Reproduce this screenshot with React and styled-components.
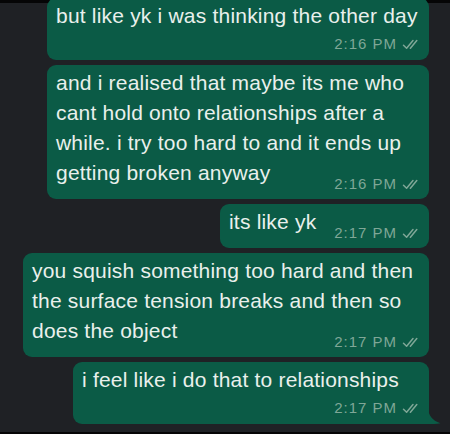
import React from "react";
import styled, { createGlobalStyle } from "styled-components";

const GlobalStyle = createGlobalStyle`
  * { box-sizing: border-box; }
  body {
    margin: 0;
    background: #1f2125;
    font-family: "Liberation Sans", Arial, sans-serif;
  }
`;

const messages = [
  {
    lines: ["but like yk i was thinking the other day"],
    time: "2:16 PM",
    width: 382,
    stacked: true,
  },
  {
    lines: [
      "and i realised that maybe its me who",
      "cant hold onto relationships after a",
      "while. i try too hard to and it ends up",
      "getting broken anyway",
    ],
    time: "2:16 PM",
    width: 382,
  },
  { lines: ["its like yk"], time: "2:17 PM", width: 209 },
  {
    lines: [
      "you squish something too hard and then",
      "the surface tension breaks and then so",
      "does the object",
    ],
    time: "2:17 PM",
    width: 406,
  },
  {
    lines: ["i feel like i do that to relationships"],
    time: "2:17 PM",
    width: 356,
    stacked: true,
    tail: true,
  },
];

function DoubleCheck() {
  return (
    <svg width="19" height="11" viewBox="0 0 19 11" fill="none">
      <path
        d="M1.5 6.2 L4.6 9.3 L11 1.5"
        stroke="currentColor"
        strokeWidth="1.5"
        strokeLinecap="round"
        strokeLinejoin="round"
      />
      <path
        d="M8.4 9.3 L14.8 1.5"
        stroke="currentColor"
        strokeWidth="1.5"
        strokeLinecap="round"
      />
    </svg>
  );
}

function Tail() {
  return (
    <TailShape width="13" height="16" viewBox="0 0 13 16">
      <path d="M0 0 C0.5 7 4 12.5 12.5 15.2 C8 16 4 16 0 16 Z" fill="#0b5b46" />
    </TailShape>
  );
}

export default function App() {
  return (
    <>
      <GlobalStyle />
      <Screen>
        {messages.map((m, i) => (
          <Bubble key={i} $width={m.width} $stacked={m.stacked} $tail={m.tail}>
            <Text $stacked={m.stacked}>
              {m.lines.map((l, j) => (
                <Line key={j}>{l}</Line>
              ))}
            </Text>
            <Meta $stacked={m.stacked}>
              <span>{m.time}</span>
              <DoubleCheck />
            </Meta>
            {m.tail && <Tail />}
          </Bubble>
        ))}
      </Screen>
    </>
  );
}

const Screen = styled.div`
  position: relative;
  width: 450px;
  height: 434px;
  overflow: hidden;
  background: #1f2125;
  display: flex;
  flex-direction: column;
  justify-content: flex-end;
  align-items: flex-end;
  gap: 5px;
  padding: 0 21px 10px 0;

  &::before,
  &::after {
    content: "";
    position: absolute;
    left: 0;
    right: 0;
    background: #050506;
  }
  &::before {
    top: 0;
    height: 3px;
  }
  &::after {
    bottom: 0;
    height: 2px;
  }
`;

/* text and time share one grid cell for short last lines;
   stacked bubbles put the time on its own row */
const Bubble = styled.div`
  position: relative;
  flex-shrink: 0;
  width: ${(p) => p.$width}px;
  background: #0b5b46;
  border-radius: 9px;
  border-bottom-right-radius: ${(p) => (p.$tail ? 0 : 9)}px;
  padding: 3px 8px ${(p) => (p.$stacked ? 6 : 5)}px 9px;
  display: grid;
  grid-template-columns: 1fr;
`;

const Text = styled.div`
  grid-area: 1 / 1;
  color: #e9f0ec;
  font-size: 21px;
  letter-spacing: 0.2px;
  line-height: 30px;
  padding-bottom: ${(p) => (p.$stacked ? 3 : 6)}px;
`;

const Line = styled.div`
  white-space: nowrap;
`;

const Meta = styled.div`
  grid-area: ${(p) => (p.$stacked ? "2 / 1" : "1 / 1")};
  justify-self: end;
  align-self: end;
  display: flex;
  align-items: center;
  gap: 5px;
  height: 20px;
  color: #7fa797;
  font-size: 15px;
  letter-spacing: 1px;
  line-height: 20px;
  white-space: nowrap;

  svg {
    margin-top: 1px;
  }
`;

const TailShape = styled.svg`
  position: absolute;
  right: -12px;
  bottom: 0;
`;
